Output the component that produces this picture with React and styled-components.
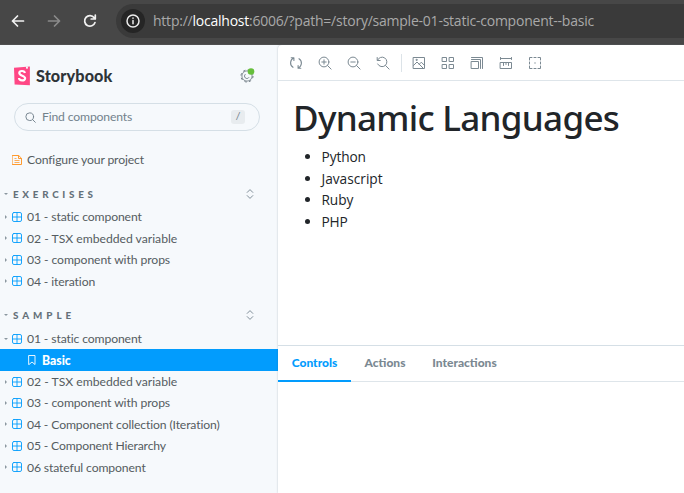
import React from "react";
import styled, { createGlobalStyle, css } from "styled-components";

const Global = createGlobalStyle`
  * { box-sizing: border-box; }
  html, body { margin: 0; padding: 0; overflow: hidden; }
  body { background: #f6f9fc; font-family: Lato, sans-serif; font-variant-ligatures: none; }
  svg { display: block; flex: none; }
`;

const Window = styled.div`
  width: 684px;
  height: 493px;
  display: flex;
  flex-direction: column;
  overflow: hidden;
`;

const BrowserBar = styled.header`
  height: 45px;
  flex: none;
  display: flex;
  align-items: flex-start;
  padding-top: 4px;
  background: #474747;
  border-bottom: 1px solid #505050;
`;

const NavButtons = styled.div`
  width: 116px;
  height: 34px;
  flex: none;
  display: flex;
  align-items: center;
  padding-left: 10px;
  gap: 20px;
`;

const AddressBar = styled.div`
  flex: 1;
  height: 34px;
  display: flex;
  align-items: center;
  padding-left: 5px;
  border-radius: 17px 0 0 17px;
  background: #3a3a3a;
`;

const SiteInfo = styled.div`
  width: 24px;
  height: 24px;
  border-radius: 50%;
  display: grid;
  place-items: center;
  background: #252525;
`;

const Url = styled.div`
  margin-left: 8px;
  font: 14px/20px "Open Sans", sans-serif;
  letter-spacing: -0.23px;
  color: #a9a9a9;
  white-space: nowrap;
`;

const Host = styled.span`
  color: #fff;
`;

const Workspace = styled.div`
  flex: 1;
  min-height: 0;
  display: flex;
`;

const Sidebar = styled.aside`
  width: 278px;
  flex: none;
  background: #f6f9fc;
`;

const Brand = styled.div`
  height: 20px;
  margin: 21px 22px 0 14px;
  display: flex;
  align-items: center;
`;

const BrandName = styled.div`
  flex: 1;
  margin-left: 6px;
  font: 900 16.2px/20px Lato, sans-serif;
  letter-spacing: 0.12px;
  color: #2e3438;
`;

const Search = styled.div`
  height: 28px;
  margin: 17px 18px 0 14px;
  padding: 0 14px 0 10px;
  display: flex;
  align-items: center;
  border: 1px solid #d5dfe6;
  border-radius: 14px;
`;

const SearchLabel = styled.span`
  flex: 1;
  margin-left: 6px;
  font-size: 12.2px;
  line-height: 18px;
  padding-bottom: 1px;
  letter-spacing: -0.16px;
  color: #73828c;
`;

const KeyHint = styled.kbd`
  width: 14px;
  height: 14px;
  border-radius: 3px;
  background: #e8ecef;
  color: #73828c;
  font: italic 10px/13px "Liberation Sans", sans-serif;
  text-align: center;
`;

const Row = styled.div`
  height: 21.4px;
  padding-left: ${(p) => (p.$nested ? 27 : 4)}px;
  display: flex;
  align-items: center;
  color: ${(p) => (p.$selected ? "#fff" : "#555c61")};
  background: ${(p) => (p.$selected ? "#029cfd" : "transparent")};
  font-size: 12.2px;
  font-weight: ${(p) => (p.$selected ? 900 : 400)};
`;

const RowLabel = styled.span`
  margin-left: 5px;
  letter-spacing: ${(p) => p.$spacing ?? 0}px;
  white-space: nowrap;
`;

const ArrowSlot = styled.span`
  width: 8px;
  display: flex;
`;

const DocRow = styled(Row)`
  margin-top: 18px;
  padding-left: 12px;
`;

const GroupHeading = styled.div`
  height: 20px;
  margin: ${(p) => p.$top}px 24px ${(p) => p.$bottom}px 4px;
  display: flex;
  align-items: center;
`;

const GroupName = styled.span`
  flex: 1;
  margin-left: 5px;
  font-size: 9.8px;
  font-weight: 900;
  letter-spacing: ${(p) => p.$spacing}px;
  color: #65717a;
`;

const Main = styled.main`
  flex: 1;
  min-width: 0;
  display: flex;
  flex-direction: column;
  background: #fff;
  box-shadow: 0 0 2px rgba(60, 80, 95, 0.35);
  border-top-left-radius: 4px;
`;

const Toolbar = styled.div`
  height: 36px;
  flex: none;
  display: flex;
  align-items: center;
  gap: 15px;
  padding-left: 11px;
  border-bottom: 1px solid #dee5ea;
`;

const Divider = styled.div`
  width: 1px;
  height: 18px;
  margin: 0 -5px 0 -4px;
  background: #dce3e8;
`;

const Canvas = styled.section`
  height: 264px;
  flex: none;
  padding: 13px 15px;
  color: #212529;
`;

const Heading = styled.h1`
  margin: 0;
  font: 500 35px/48px "Noto Sans", sans-serif;
  letter-spacing: -0.7px;
  white-space: nowrap;
`;

const LanguageList = styled.ul`
  margin: 4px 0 0;
  padding-left: 28.5px;
`;

const Language = styled.li`
  font: 13.7px/21.6px "Open Sans", sans-serif;
  letter-spacing: ${(p) => p.$spacing}px;
`;

const Tabs = styled.div`
  height: 37px;
  flex: none;
  display: flex;
  border-top: 1px solid #d5dfe6;
  border-bottom: 1px solid #dee5ea;
`;

const Tab = styled.div`
  width: ${(p) => p.$width}px;
  height: 36px;
  text-align: center;
  font: 900 12px/34px Lato, sans-serif;
  color: #7b8992;
  ${(p) =>
    p.$active &&
    css`
      color: #029cfd;
      border-bottom: 2px solid #029cfd;
    `}
`;

function Icon({ size = 14, box = 14, color = "#7b8992", width = 1, children }) {
  return (
    <svg width={size} height={size} viewBox={`0 0 ${box} ${box}`} fill="none"
      stroke={color} strokeWidth={width} strokeLinecap="round" strokeLinejoin="round">
      {children}
    </svg>
  );
}

const Arrow = ({ open }) => (
  <svg width="4" height="6" viewBox="0 0 4 6" fill="#8b979f">
    {open ? <path d="M0 2h4L2 4z" /> : <path d="M1 1l2 2-2 2z" />}
  </svg>
);

const ComponentIcon = () => (
  <Icon size={10} box={10} color="#029cfd" width={0.9}>
    <rect x=".5" y=".5" width="9" height="9" rx="1.5" />
    <path d="M5 .5v9M.5 5h9" />
  </Icon>
);

const ExpandIcon = () => (
  <svg width="8" height="10" viewBox="0 0 8 10" fill="none" stroke="#73828c" strokeWidth=".9" strokeLinecap="round">
    <path d="M1.2 3.4L4 .6l2.8 2.8M1.2 6.6L4 9.4l2.8-2.8" />
  </svg>
);

const Glass = () => (
  <>
    <circle cx="6" cy="6" r="4.9" />
    <path d="M9.6 9.6l3.5 3.5" />
  </>
);

function Entry({ open, spacing, children }) {
  return (
    <Row>
      <ArrowSlot><Arrow open={open} /></ArrowSlot>
      <ComponentIcon />
      <RowLabel $spacing={spacing}>{children}</RowLabel>
    </Row>
  );
}

function Group({ name, top, bottom, spacing, children }) {
  return (
    <>
      <GroupHeading $top={top} $bottom={bottom}>
        <Arrow open />
        <GroupName $spacing={spacing}>{name}</GroupName>
        <ExpandIcon />
      </GroupHeading>
      {children}
    </>
  );
}

function SidebarPanel() {
  return (
    <Sidebar>
      <Brand>
        <svg width="16" height="20" viewBox="0 0 16 20">
          <path fill="#ff4785" d="M0 1.7L15.9.5v18.7L.6 18.6z" />
          <path fill="#f6f9fc" d="M12 .6l1.9-.1v2.4l-.9-.7-1 .7z" />
          <path d="M10.9 7C10.5 4.3 5.3 4.4 5.3 7c0 3 5.8 2.3 5.8 5.3 0 3-5.8 2.8-6.1-.3" fill="none" stroke="#fff" strokeWidth="2.2" />
        </svg>
        <BrandName>Storybook</BrandName>
        <svg width="16" height="18" viewBox="0 0 16 18" fill="none" stroke="#6b7780">
          <circle cx="7" cy="9" r="5.1" strokeWidth=".8" />
          <circle cx="7" cy="9" r="6" strokeWidth="1" strokeDasharray="2.3 2.41" />
          <path d="M5.6 7.1a2.4 2.4 0 1 0 3.4 3.2" strokeWidth=".9" />
          <circle cx="11" cy="4.5" r="3.3" fill="#66bf3c" stroke="none" />
        </svg>
      </Brand>
      <Search>
        <Icon size={11} color="#73828c" width={1.2}><Glass /></Icon>
        <SearchLabel>Find components</SearchLabel>
        <KeyHint>/</KeyHint>
      </Search>
      <DocRow>
        <Icon size={10} box={10} color="#ff9a2e">
          <path d="M.5.5h6.2l2.8 2.8v6.2h-9zM6.5.7v2.8h2.8" />
          <path d="M2.5 3.5h2M2.5 5.5h5M2.5 7.5h5" strokeWidth=".8" strokeLinecap="butt" />
        </Icon>
        <RowLabel $spacing={-0.14}>Configure your project</RowLabel>
      </DocRow>
      <Group name="EXERCISES" top={14} bottom={1.8} spacing={3.75}>
        <Entry spacing={-0.13}>01 - static component</Entry>
        <Entry spacing={-0.01}>02 - TSX embedded variable</Entry>
        <Entry spacing={-0.09}>03 - component with props</Entry>
        <Entry spacing={-0.13}>04 - iteration</Entry>
      </Group>
      <Group name="SAMPLE" top={13.6} bottom={2.72} spacing={3.95}>
        <Entry open spacing={-0.13}>01 - static component</Entry>
        <Row $nested $selected>
          <Icon size={10} box={10} color="#fff" width={0.9}>
            <path d="M2 .5h6v9L5 7 2 9.5z" />
          </Icon>
          <RowLabel>Basic</RowLabel>
        </Row>
        <Entry spacing={-0.01}>02 - TSX embedded variable</Entry>
        <Entry spacing={-0.09}>03 - component with props</Entry>
        <Entry spacing={-0.13}>04 - Component collection (Iteration)</Entry>
        <Entry spacing={-0.17}>05 - Component Hierarchy</Entry>
        <Entry spacing={-0.13}>06 stateful component</Entry>
      </Group>
    </Sidebar>
  );
}

function CanvasToolbar() {
  return (
    <Toolbar>
      <Icon width={1.1}>
        <path d="M4.8 2.1A5.2 5.2 0 0 0 4 11.3M9.2 11.9a5.2 5.2 0 0 0 .8-9.2M2.2 1.7h2.7v2.7M11.8 12.3H9.1V9.6" />
      </Icon>
      <Icon><Glass /><path d="M6 3.8v4.4M3.8 6h4.4" /></Icon>
      <Icon><Glass /><path d="M3.8 6h4.4" /></Icon>
      <Icon><path d="M1.2 1.5v3h3M1.5 4.3a4.8 4.8 0 1 1 .2 3.7M9.6 9.6l3.5 3.5" /></Icon>
      <Divider />
      <Icon>
        <path d="M1.5 1.5h11v11h-11zM1.5 9.5L5 6l6.5 6.5M7.3 8.2l2-2 3.2 3.2" />
        <circle cx="4.5" cy="3.9" r=".6" />
      </Icon>
      <Icon><path d="M1.5 1.5h4v4h-4zM8.5 1.5h4v4h-4zM1.5 8.5h4v4h-4zM8.5 8.5h4v4h-4z" /></Icon>
      <Icon><path d="M1.5 5.5h7v7h-7zM1.5 3.5h9v9M1.5 1.5h11v11" /></Icon>
      <Icon><path d="M1.5 2.5h11M1.5 1.5v2M12.5 1.5v2M1.5 6.5h11v6h-11zM4.5 6.5v3M7 6.5v2M9.5 6.5v3" /></Icon>
      <Icon><path d="M1.5 4V1.5H4M6 1.5h2M10 1.5h2.5V4M12.5 6v2M12.5 10v2.5H10M8 12.5H6M4 12.5H1.5V10M1.5 8V6M7 6.7v.6" /></Icon>
    </Toolbar>
  );
}

export default function App() {
  return (
    <Window>
      <Global />
      <BrowserBar>
        <NavButtons>
          <Icon size={16} box={16} color="#f2f2f2" width={1.7}><path d="M13.5 8h-11M7.5 3L2.5 8l5 5" /></Icon>
          <Icon size={16} box={16} color="#8b8b8b" width={1.7}><path d="M2.5 8h11M8.5 3l5 5-5 5" /></Icon>
          <Icon size={16} box={16} color="#f2f2f2" width={1.7}><path d="M13 9.5A5.3 5.3 0 1 1 12.2 4.7M13.3 2v4H9.2" /></Icon>
        </NavButtons>
        <AddressBar>
          <SiteInfo>
            <Icon size={14} color="#ececec" width={1.5}>
              <circle cx="7" cy="7" r="6" /><path d="M7 6.5v3.3M7 4.1v.1" />
            </Icon>
          </SiteInfo>
          <Url>http://<Host>localhost</Host>:6006/?path=/story/sample-01-static-component--basic</Url>
        </AddressBar>
      </BrowserBar>
      <Workspace>
        <SidebarPanel />
        <Main>
          <CanvasToolbar />
          <Canvas>
            <Heading>Dynamic Languages</Heading>
            <LanguageList>
              <Language $spacing={-0.1}>Python</Language>
              <Language $spacing={0}>Javascript</Language>
              <Language $spacing={-0.1}>Ruby</Language>
              <Language $spacing={-0.2}>PHP</Language>
            </LanguageList>
          </Canvas>
          <Tabs>
            <Tab $active $width={73}>Controls</Tab>
            <Tab $width={68}>Actions</Tab>
            <Tab $width={91}>Interactions</Tab>
          </Tabs>
        </Main>
      </Workspace>
    </Window>
  );
}
